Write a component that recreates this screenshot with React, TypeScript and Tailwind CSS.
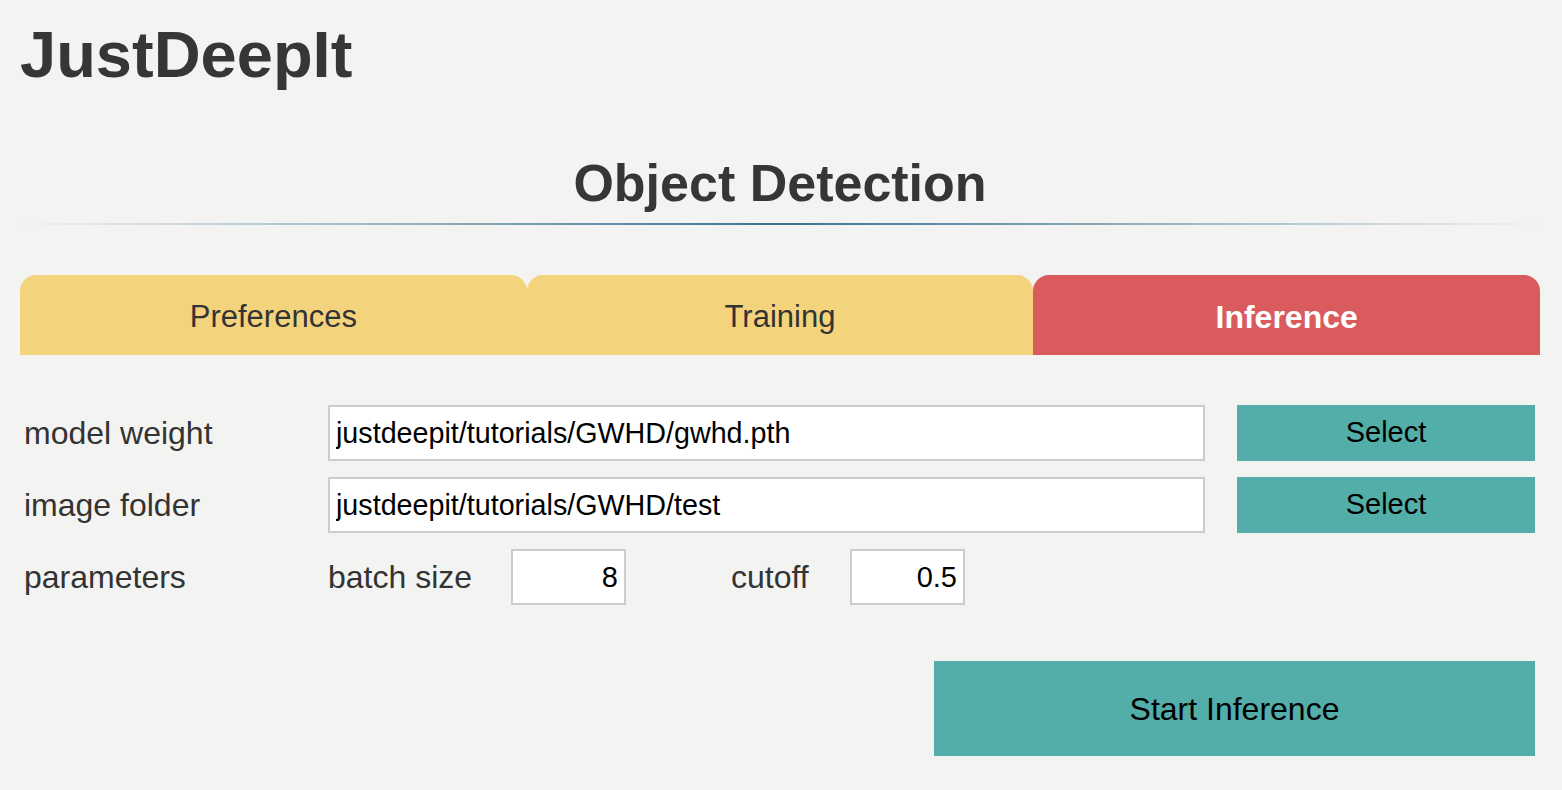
import React from 'react'

const font = { fontFamily: '"Liberation Sans", Arial, Helvetica, sans-serif' }

function Tab({ label, active }: { label: string; active?: boolean }) {
  return (
    <div
      className={
        active
          ? 'flex h-[80px] items-center justify-center rounded-t-[16px] bg-[#d95b5e] pt-[4px] text-[32px] font-bold text-white'
          : 'flex h-[80px] items-center justify-center rounded-t-[16px] bg-[#f3d47c] pt-[4px] text-[31px] text-[#333333]'
      }
    >
      {label}
    </div>
  )
}

function PathRow({ label, value }: { label: string; value: string }) {
  return (
    <div className="flex h-[56px] items-center">
      <div className="w-[304px] text-[32px] text-[#333333]">{label}</div>
      <input
        readOnly
        value={value}
        className="h-[56px] w-[877px] border-2 border-[#cccccc] bg-white pl-[6px] text-[28.7px] text-black outline-none"
        style={font}
      />
      <button className="ml-[32px] h-[56px] w-[298px] bg-[#53ada9] text-[29px] text-black">
        Select
      </button>
    </div>
  )
}

export default function App() {
  return (
    <div className="min-h-screen bg-[#f3f3f2] pl-5 pr-[22px]" style={font}>
      <h1 className="pt-[22px] text-[65px] font-bold leading-none text-[#363636]">JustDeepIt</h1>

      <h2 className="mt-[70px] text-center text-[52px] font-bold leading-none text-[#363636]">
        Object Detection
      </h2>
      <div className="mt-[14px] h-[2px] bg-linear-to-r from-transparent via-[#3a7392] to-transparent" />

      <div className="mt-[50px] grid grid-cols-3">
        <Tab label="Preferences" />
        <Tab label="Training" />
        <Tab label="Inference" active />
      </div>

      <div className="mt-[50px] flex flex-col gap-[16px] pl-1 pr-[5px]">
        <PathRow label="model weight" value="justdeepit/tutorials/GWHD/gwhd.pth" />
        <PathRow label="image folder" value="justdeepit/tutorials/GWHD/test" />
        <div className="flex h-[56px] items-center">
          <div className="w-[304px] text-[32px] text-[#333333]">parameters</div>
          <div className="w-[183px] text-[32px] text-[#333333]">batch size</div>
          <input
            readOnly
            value="8"
            className="h-[56px] w-[115px] border-2 border-[#cccccc] bg-white pr-[6px] text-right text-[29px] text-black outline-none"
            style={font}
          />
          <div className="w-[224px] pl-[105px] text-[32px] text-[#333333]">cutoff</div>
          <input
            readOnly
            value="0.5"
            className="h-[56px] w-[115px] border-2 border-[#cccccc] bg-white pr-[6px] text-right text-[29px] text-black outline-none"
            style={font}
          />
        </div>

        <div className="mt-[40px] flex justify-end">
          <button className="h-[95px] w-[601px] bg-[#53ada9] text-[32px] text-black">
            Start Inference
          </button>
        </div>
      </div>
    </div>
  )
}
